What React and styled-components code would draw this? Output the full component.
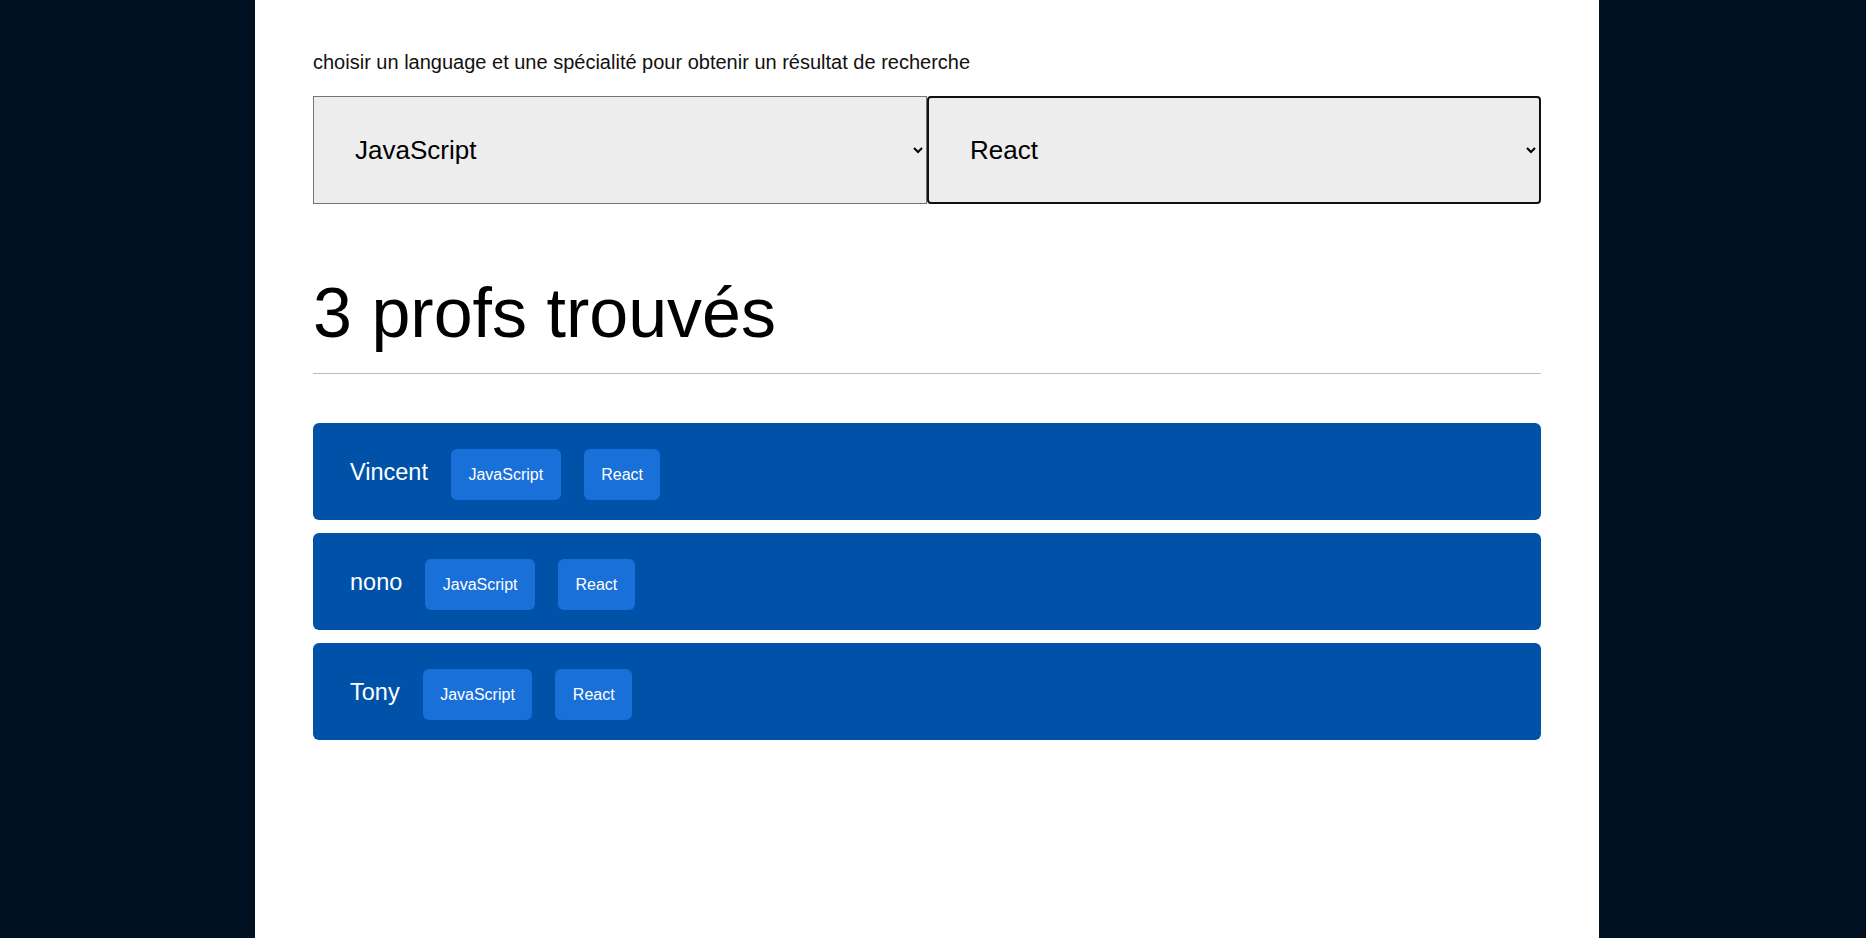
import React from "react";
import styled, { createGlobalStyle } from "styled-components";

const GlobalStyle = createGlobalStyle`
  html, body {
    margin: 0;
    padding: 0;
    background: #001221;
    font-family: "Liberation Sans", Arial, sans-serif;
  }
`;

const Page = styled.div`
  display: grid;
  grid-template-columns: 255px 1344px 1fr;
  min-height: 938px;
`;

const Panel = styled.main`
  grid-column: 2;
  background: #ffffff;
  padding: 51px 58px 0;
  box-sizing: border-box;
  min-height: 938px;
`;

const Intro = styled.p`
  margin: 0;
  font-size: 20px;
  line-height: 23px;
  color: #111;
`;

const Filters = styled.div`
  display: grid;
  grid-template-columns: 1fr 1fr;
  margin-top: 22px;
`;

const Select = styled.select`
  height: 108px;
  box-sizing: border-box;
  background: #ededed;
  color: #000;
  font-family: "Liberation Sans", Arial, sans-serif;
  font-size: 26px;
  padding: 0 8px 0 37px;
  border: ${(p) => (p.$focused ? "2px solid #101010" : "1px solid #767676")};
  border-radius: ${(p) => (p.$focused ? "4px" : "0")};
  outline: none;
`;

const Title = styled.h1`
  margin: 69px 0 0;
  font-size: 70px;
  line-height: 80px;
  font-weight: 400;
  color: #000;
`;

const Divider = styled.hr`
  margin: 20px 0 0;
  border: 0;
  border-top: 1px solid #bbbbbb;
`;

const List = styled.ul`
  list-style: none;
  margin: 49px 0 0;
  padding: 0;
  display: flex;
  flex-direction: column;
  gap: 13px;
`;

const Card = styled.li`
  display: flex;
  align-items: baseline;
  gap: 23px;
  padding: 26px 37px 20px;
  background: #0052a8;
  border-radius: 6px;
  color: #fff;
`;

const Name = styled.span`
  font-size: 23.5px;
  line-height: 27px;
`;

const Tag = styled.span`
  display: inline-block;
  padding: 16px 17.5px;
  font-size: 16px;
  line-height: 19px;
  background: #1a70d9;
  border-radius: 6px;
  color: #fff;
`;

const profs = [
  { name: "Vincent", tags: ["JavaScript", "React"] },
  { name: "nono", tags: ["JavaScript", "React"] },
  { name: "Tony", tags: ["JavaScript", "React"] },
];

export default function App() {
  return (
    <>
      <GlobalStyle />
      <Page>
        <Panel>
          <Intro>
            choisir un language et une spécialité pour obtenir un résultat de
            recherche
          </Intro>
          <Filters>
            <Select defaultValue="JavaScript">
              <option>JavaScript</option>
              <option>Python</option>
              <option>PHP</option>
            </Select>
            <Select $focused defaultValue="React">
              <option>React</option>
              <option>Vue</option>
              <option>Angular</option>
            </Select>
          </Filters>
          <Title>{profs.length} profs trouvés</Title>
          <Divider />
          <List>
            {profs.map((p) => (
              <Card key={p.name}>
                <Name>{p.name}</Name>
                {p.tags.map((t) => (
                  <Tag key={t}>{t}</Tag>
                ))}
              </Card>
            ))}
          </List>
        </Panel>
      </Page>
    </>
  );
}
